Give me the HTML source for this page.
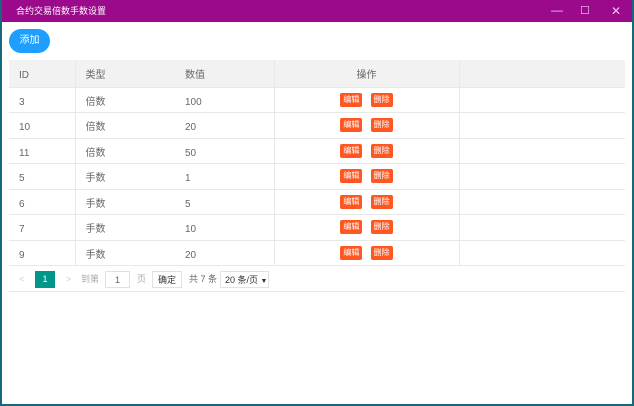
<!DOCTYPE html><html><head><meta charset="utf-8"><style>
*{margin:0;padding:0;box-sizing:border-box}
body{width:634px;height:406px;background:#16687a;position:relative;overflow:hidden;font-family:"Liberation Sans","Noto Sans CJK SC",sans-serif;font-size:10px;color:#666}
.win{position:absolute;left:2px;top:0;width:630px;height:404px;background:#fff}
.tb{height:22px;background:#9b0a8b;color:#fff;font-size:9px;line-height:22px;padding-left:14px;position:relative}
.ctl{position:absolute;top:0;color:#f3c4ee;font-size:12px;line-height:22px}
.add{position:absolute;left:7px;top:29px;width:41px;height:24px;border-radius:12px;background:#1e9fff;color:#fff;font-size:10px;line-height:24px;text-align:center}
table{position:absolute;left:7px;top:60px;width:616px;border-collapse:collapse}
td,th{height:25.5px;border-bottom:1px solid #e8e8e8;font-weight:normal;text-align:left;font-size:10px;line-height:12px;color:#666;padding-left:10px;padding-top:6px;vertical-align:middle}
th{background:#f2f2f2;height:27px}
.c1{width:66px;border-right:1px solid #e8e8e8}
.c2{width:100px}.c3{width:99px;border-right:1px solid #e8e8e8}
.c4{width:185px;border-right:1px solid #e8e8e8;text-align:center;padding:0}
th.c4{padding-top:6px}
.b{display:inline-block;width:22px;height:14px;background:#ff5722;color:#fff;font-size:8px;line-height:14px;text-align:center;border-radius:2px;vertical-align:middle}
.pg{position:absolute;left:7px;top:265px;width:616px;height:27px;border-bottom:1px solid #e8e8e8;font-size:9px;color:#666}
.pg span{position:absolute;top:6px;line-height:16px}
.box{border:1px solid #e2e2e2;text-align:center;height:17px}
</style></head><body><div class="win">
<div class="tb">合约交易倍数手数设置
<span class="ctl" style="left:549px;top:-1px">—</span>
<span class="ctl" style="left:578px;font-size:11px">☐</span>
<span class="ctl" style="left:609px">✕</span></div>
<div class="add">添加</div>
<table>
<tr><th class="c1">ID</th><th class="c2">类型</th><th class="c3">数值</th><th class="c4">操作</th><th></th></tr>
<tr><td class="c1">3</td><td class="c2">倍数</td><td class="c3">100</td><td class="c4"><span class="b">编辑</span>&nbsp;&nbsp;&nbsp;<span class="b">删除</span></td><td></td></tr>
<tr><td class="c1">10</td><td class="c2">倍数</td><td class="c3">20</td><td class="c4"><span class="b">编辑</span>&nbsp;&nbsp;&nbsp;<span class="b">删除</span></td><td></td></tr>
<tr><td class="c1">11</td><td class="c2">倍数</td><td class="c3">50</td><td class="c4"><span class="b">编辑</span>&nbsp;&nbsp;&nbsp;<span class="b">删除</span></td><td></td></tr>
<tr><td class="c1">5</td><td class="c2">手数</td><td class="c3">1</td><td class="c4"><span class="b">编辑</span>&nbsp;&nbsp;&nbsp;<span class="b">删除</span></td><td></td></tr>
<tr><td class="c1">6</td><td class="c2">手数</td><td class="c3">5</td><td class="c4"><span class="b">编辑</span>&nbsp;&nbsp;&nbsp;<span class="b">删除</span></td><td></td></tr>
<tr><td class="c1">7</td><td class="c2">手数</td><td class="c3">10</td><td class="c4"><span class="b">编辑</span>&nbsp;&nbsp;&nbsp;<span class="b">删除</span></td><td></td></tr>
<tr><td class="c1">9</td><td class="c2">手数</td><td class="c3">20</td><td class="c4"><span class="b">编辑</span>&nbsp;&nbsp;&nbsp;<span class="b">删除</span></td><td></td></tr>
</table>
<div class="pg">
<span style="left:10px;color:#ccc">&lt;</span>
<span style="left:26px;width:20px;height:17px;background:#009688;color:#fff;text-align:center">1</span>
<span style="left:57px;color:#ccc">&gt;</span>
<span style="left:72px;color:#aaa">到第</span>
<span class="box" style="left:96px;width:25px">1</span>
<span style="left:128px;color:#aaa">页</span>
<span class="box" style="left:143px;width:30px;color:#333">确定</span>
<span style="left:180px">共 7 条</span>
<span class="box" style="left:211px;width:49px;color:#333;text-align:left;padding-left:4px">20 条/页 <b style="font-size:7px">▼</b></span>
</div>
</div></body></html>
